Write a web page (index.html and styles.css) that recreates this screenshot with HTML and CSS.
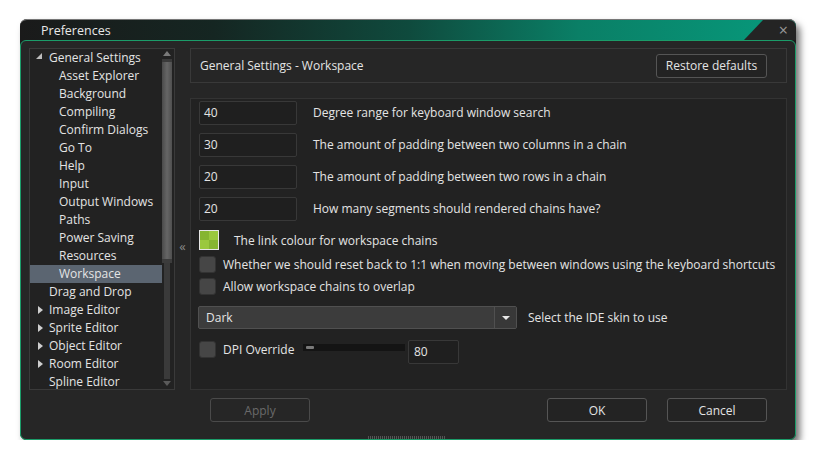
FILE: index.html
```html
<!DOCTYPE html>
<html>
<head>
<meta charset="utf-8">
<link rel="stylesheet" href="styles.css">
</head>
<body>
<div class="window">
  <div class="titlebar">
    <span class="title">Preferences</span>
    <span class="closebox">×</span>
  </div>
  <div class="frame">
    <div class="main">
      <div class="tree">
        <ul class="items">
          <li class="exp open">General Settings</li>
          <li class="child">Asset Explorer</li>
          <li class="child">Background</li>
          <li class="child">Compiling</li>
          <li class="child">Confirm Dialogs</li>
          <li class="child">Go To</li>
          <li class="child">Help</li>
          <li class="child">Input</li>
          <li class="child">Output Windows</li>
          <li class="child">Paths</li>
          <li class="child">Power Saving</li>
          <li class="child">Resources</li>
          <li class="child sel">Workspace</li>
          <li>Drag and Drop</li>
          <li class="exp">Image Editor</li>
          <li class="exp">Sprite Editor</li>
          <li class="exp">Object Editor</li>
          <li class="exp">Room Editor</li>
          <li>Spline Editor</li>
        </ul>
        <div class="scroll">
          <div class="arrow up"></div>
          <div class="thumb"></div>
          <div class="rest"></div>
          <div class="arrow down"></div>
        </div>
      </div>
      <div class="collapse">«</div>
      <div class="right">
        <div class="header">
          <span>General Settings - Workspace</span>
          <button class="btn restore">Restore defaults</button>
        </div>
        <div class="content">
          <div class="row num"><div class="input">40</div><span>Degree range for keyboard window search</span></div>
          <div class="row num"><div class="input">30</div><span>The amount of padding between two columns in a chain</span></div>
          <div class="row num"><div class="input">20</div><span>The amount of padding between two rows in a chain</span></div>
          <div class="row num"><div class="input">20</div><span>How many segments should rendered chains have?</span></div>
          <div class="row swrow"><div class="swatch"><i></i><i class="l"></i><i class="l"></i><i></i></div><span>The link colour for workspace chains</span></div>
          <div class="row chk"><div class="box"></div><span>Whether we should reset back to 1:1 when moving between windows using the keyboard shortcuts</span></div>
          <div class="row chk"><div class="box"></div><span>Allow workspace chains to overlap</span></div>
          <div class="row ddrow">
            <div class="dropdown"><span>Dark</span><div class="ddbtn"><svg width="10" height="6" viewBox="0 0 10 6"><path d="M1 1h8L5 5z" fill="#e8e8e8"/></svg></div></div>
            <span>Select the IDE skin to use</span>
          </div>
          <div class="row dpi">
            <div class="box"></div><span class="dpilabel">DPI Override</span>
            <div class="slider"><div class="knob"></div></div>
            <div class="input small">80</div>
          </div>
        </div>
      </div>
    </div>
    <div class="buttons">
      <button class="btn apply">Apply</button>
      <div class="spacer"></div>
      <button class="btn ok">OK</button>
      <button class="btn cancel">Cancel</button>
    </div>
    <div class="grip"></div>
  </div>
</div>
</body>
</html>
```
FILE: styles.css
```css
* { box-sizing: border-box; }
body {
  margin: 0;
  background: #ffffff;
  font-family: "Open Sans", "Noto Sans", sans-serif;
  font-size: 12px;
  color: #e4e4e4;
}
.window {
  margin: 19px 0 0 20px;
  width: 776px;
  height: 421px;
  border-radius: 7px;
  background: #1c1c1c;
  box-shadow: 4px 5px 7px rgba(0,0,0,0.55);
  display: flex;
  flex-direction: column;
}
.titlebar {
  height: 21px;
  flex: none;
  display: flex;
  align-items: center;
  border-radius: 7px 7px 0 0;
  background: linear-gradient(to right, #1a1a1a 0%, #152622 25%, #0f4a3d 50%, #0a7f66 72%, #079a7c 100%);
  border-top: 1px solid #777;
}
.title {
  padding-left: 21px;
  font-size: 12.5px;
  color: #e8e8e8;
  flex: 1;
}
.closebox {
  width: 52px;
  height: 100%;
  align-self: stretch;
  background: #242424;
  clip-path: polygon(19px 0, 100% 0, 100% 100%, 0 100%);
  border-top-right-radius: 7px;
  color: #9a9a9a;
  font-size: 16px;
  line-height: 20px;
  text-align: right;
  padding-right: 8px;
}
.frame {
  flex: 1;
  border: 1px solid #1b9c69;
  border-radius: 6px;
  background: #262626;
  display: flex;
  flex-direction: column;
  padding: 7px 8px 0 8px;
  position: relative;
  min-height: 0;
}
.main {
  display: flex;
  height: 342px;
}
.tree {
  width: 146px;
  flex: none;
  background: #222222;
  border: 1px solid #3a3a3a;
  display: flex;
  padding-right: 1px;
}
.items {
  list-style: none;
  margin: 0;
  padding: 0;
  flex: 1;
}
.items li {
  height: 18px;
  line-height: 18px;
  padding-left: 19px;
  white-space: nowrap;
  position: relative;
}
.items li.child { padding-left: 29px; }
.items li.sel { background: #5b6571; }
.items li.exp::before {
  content: "";
  position: absolute;
  left: 8px;
  top: 5px;
  width: 0; height: 0;
  border-left: 5px solid #cfcfcf;
  border-top: 4px solid transparent;
  border-bottom: 4px solid transparent;
}
.items li.exp.open::before {
  left: 6px;
  top: 4px;
  border-left: 6px solid transparent;
  border-top: none;
  border-bottom: 6px solid #bdbdbd;
  border-right: none;
}
.scroll {
  width: 10px;
  flex: none;
  display: flex;
  flex-direction: column;
  align-items: center;
  margin: 1px 1px 1px 0;
}
.arrow { width: 0; height: 0; flex: none; }
.arrow.up {
  border-left: 4px solid transparent;
  border-right: 4px solid transparent;
  border-bottom: 5px solid #7a7a7a;
  margin: 1px 0 3px;
}
.arrow.down {
  border-left: 4px solid transparent;
  border-right: 4px solid transparent;
  border-top: 5px solid #5a5a5a;
  margin: 2px 0 2px;
}
.thumb {
  width: 10px;
  height: 204px;
  flex: none;
  background: linear-gradient(to right, #4a4a4a, #666 50%, #4f4f4f);
  border-top: 3px solid #3a3a3a;
  border-bottom: 4px solid #3c3c3c;
}
.rest {
  flex: 1;
  width: 6px;
  background: #3a3a3a;
}
.collapse {
  width: 15px;
  flex: none;
  display: flex;
  align-items: flex-start;
  justify-content: center;
  color: #8a8a8a;
  font-size: 13px;
  line-height: 18px;
  padding-top: 189px;
}
.right {
  flex: 1;
  min-width: 0;
  display: flex;
  flex-direction: column;
  gap: 15px;
}
.header {
  height: 35px;
  flex: none;
  border: 1px solid #393939;
  background: #262626;
  display: flex;
  align-items: center;
  justify-content: space-between;
  padding: 0 19px 0 9px;
}
.btn {
  font-family: "Open Sans", "Noto Sans", sans-serif;
  font-size: 12px;
  color: #e4e4e4;
  background: #232323;
  border: 1px solid #555;
  border-radius: 3px;
  height: 24px;
  padding: 0;
}
.restore { width: 111px; }
.content {
  flex: 1;
  background: #222222;
  border: 1px solid #333;
  padding: 2px 8px 0 8px;
  overflow: hidden;
}
.row {
  display: flex;
  align-items: center;
  white-space: nowrap;
}
.row.num { height: 32px; gap: 16px; align-items: flex-start; }
.row.num span { line-height: 24px; }
.input {
  width: 98px;
  height: 24px;
  flex: none;
  background: #1f1f1f;
  border: 1px solid #383838;
  border-radius: 2px;
  padding-left: 4px;
  line-height: 22px;
}
.swrow { height: 20px; gap: 15px; margin-top: 1px; margin-bottom: 3px; }
.swatch {
  width: 20px;
  height: 20px;
  flex: none;
  border: 1px solid #e6e6e6;
  display: grid;
  grid-template-columns: 1fr 1fr;
  grid-template-rows: 1fr 1fr;
  background: #88b832;
}
.swatch i { background: #86b531; }
.swatch i.l { background: #9ac83e; }
.chk { height: 22px; gap: 7px; }
.box {
  width: 17px;
  height: 17px;
  flex: none;
  background: #464646;
  border: 1px solid #333;
  border-radius: 3px;
}
.ddrow { height: 23px; gap: 11px; margin-top: 9px; }
.dropdown {
  width: 319px;
  height: 23px;
  flex: none;
  display: flex;
  border: 1px solid #505050;
  border-radius: 2px;
  background: #3c3c3c;
  margin-left: -1px;
}
.dropdown span {
  flex: 1;
  padding-left: 7px;
  line-height: 21px;
}
.ddbtn {
  width: 22px;
  border-left: 1px solid #505050;
  display: flex;
  align-items: center;
  justify-content: center;
  background: #383838;
}
.dpi { height: 24px; margin-top: 8px; }
.dpilabel { margin-left: 7px; width: 80px; }
.slider {
  width: 102px;
  flex: none;
  height: 7px;
  background: #141414;
  margin-top: -3px;
  padding: 2px 0 0 3px;
}
.knob { width: 8px; height: 3px; background: #7a7a7a; border-radius: 1px; }
.input.small {
  width: 51px;
  margin-left: 3px;
  margin-top: 5px;
  padding-left: 5px;
}
.buttons {
  display: flex;
  padding: 8px 20px 0 181px;
  gap: 20px;
}
.buttons .btn { width: 100px; }
.apply { color: #6a6a6a; border-color: #4a4a4a; background: #262626; }
.spacer { flex: 1; }
.grip {
  position: absolute;
  left: 347px;
  bottom: 0;
  width: 78px;
  height: 3px;
  background: repeating-linear-gradient(to right, #555 0 1px, transparent 1px 2px);
}
```
